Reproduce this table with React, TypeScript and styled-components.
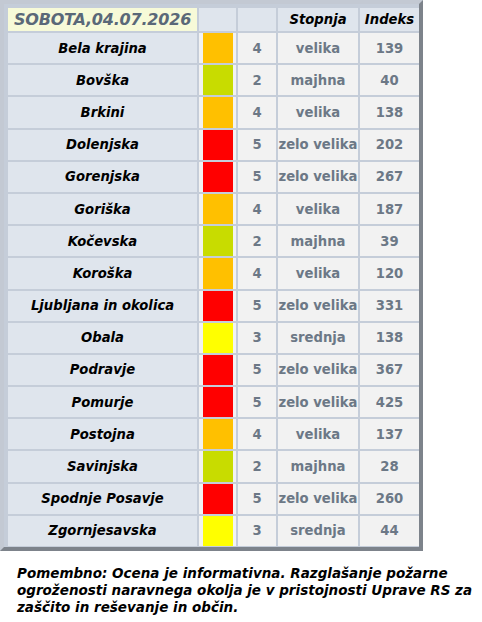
import React from "react";
import styled, { createGlobalStyle } from "styled-components";

const Global = createGlobalStyle`
  body {
    margin: 0;
    background: white;
    font-family: "DejaVu Sans", Verdana, sans-serif;
  }
`;

type Row = { name: string; level: number; label: string; index: number };

const rows: Row[] = [
  { name: "Bela krajina", level: 4, label: "velika", index: 139 },
  { name: "Bovška", level: 2, label: "majhna", index: 40 },
  { name: "Brkini", level: 4, label: "velika", index: 138 },
  { name: "Dolenjska", level: 5, label: "zelo velika", index: 202 },
  { name: "Gorenjska", level: 5, label: "zelo velika", index: 267 },
  { name: "Goriška", level: 4, label: "velika", index: 187 },
  { name: "Kočevska", level: 2, label: "majhna", index: 39 },
  { name: "Koroška", level: 4, label: "velika", index: 120 },
  { name: "Ljubljana in okolica", level: 5, label: "zelo velika", index: 331 },
  { name: "Obala", level: 3, label: "srednja", index: 138 },
  { name: "Podravje", level: 5, label: "zelo velika", index: 367 },
  { name: "Pomurje", level: 5, label: "zelo velika", index: 425 },
  { name: "Postojna", level: 4, label: "velika", index: 137 },
  { name: "Savinjska", level: 2, label: "majhna", index: 28 },
  { name: "Spodnje Posavje", level: 5, label: "zelo velika", index: 260 },
  { name: "Zgornjesavska", level: 3, label: "srednja", index: 44 },
];

const levelColors: Record<number, string> = {
  2: "#c8dc00",
  3: "#ffff00",
  4: "#ffc000",
  5: "#ff0000",
};

const Table = styled.div`
  display: grid;
  grid-template-columns: 189px 37px 38px 80px 59px;
  grid-template-rows: 23px repeat(16, 30.2px);
  gap: 2px;
  width: max-content;
  padding: 4px 0 1px 4px;
  background: #c5cdd9;
  border-style: solid;
  border-width: 4px;
  border-color: #c3c9d3 #7d838b #7d838b #c3c9d3;
`;

const Cell = styled.div`
  display: flex;
  align-items: center;
  justify-content: center;
  font-size: 13.2px;
  font-weight: bold;
  white-space: nowrap;
  overflow: hidden;
`;

const DateCell = styled(Cell)`
  background: #f7fad8;
  color: #5a6878;
  font-size: 16px;
  font-style: italic;
  letter-spacing: -0.2px;
`;

const HeadCell = styled(Cell)`
  background: #dfe5ed;
  color: #000;
  font-style: italic;
`;

const NameCell = styled(Cell)`
  background: #dfe5ed;
  color: #000;
  font-style: italic;
`;

const ValueCell = styled(Cell)`
  background: #f2f2f2;
  color: #6c7886;
`;

const SwatchCell = styled.div`
  display: flex;
  background: #f2f2f2;
  padding: 0 3px 0 4px;
`;

const Swatch = styled.div<{ $color: string }>`
  flex: 1;
  background: ${(p) => p.$color};
`;

const Note = styled.p`
  margin: 14px 0 0 0;
  padding-left: 17px;
  width: 465px;
  font-size: 13.5px;
  font-weight: bold;
  font-style: italic;
  line-height: 17px;
  color: #000;
`;

export default function App() {
  return (
    <>
      <Global />
      <Table>
        <DateCell>SOBOTA,04.07.2026</DateCell>
        <HeadCell />
        <HeadCell />
        <HeadCell>Stopnja</HeadCell>
        <HeadCell>Indeks</HeadCell>
        {rows.map((r) => (
          <React.Fragment key={r.name}>
            <NameCell>{r.name}</NameCell>
            <SwatchCell>
              <Swatch $color={levelColors[r.level]} />
            </SwatchCell>
            <ValueCell>{r.level}</ValueCell>
            <ValueCell>{r.label}</ValueCell>
            <ValueCell>{r.index}</ValueCell>
          </React.Fragment>
        ))}
      </Table>
      <Note>
        Pomembno: Ocena je informativna. Razglašanje požarne ogroženosti
        naravnega okolja je v pristojnosti Uprave RS za zaščito in reševanje
        in občin.
      </Note>
    </>
  );
}
